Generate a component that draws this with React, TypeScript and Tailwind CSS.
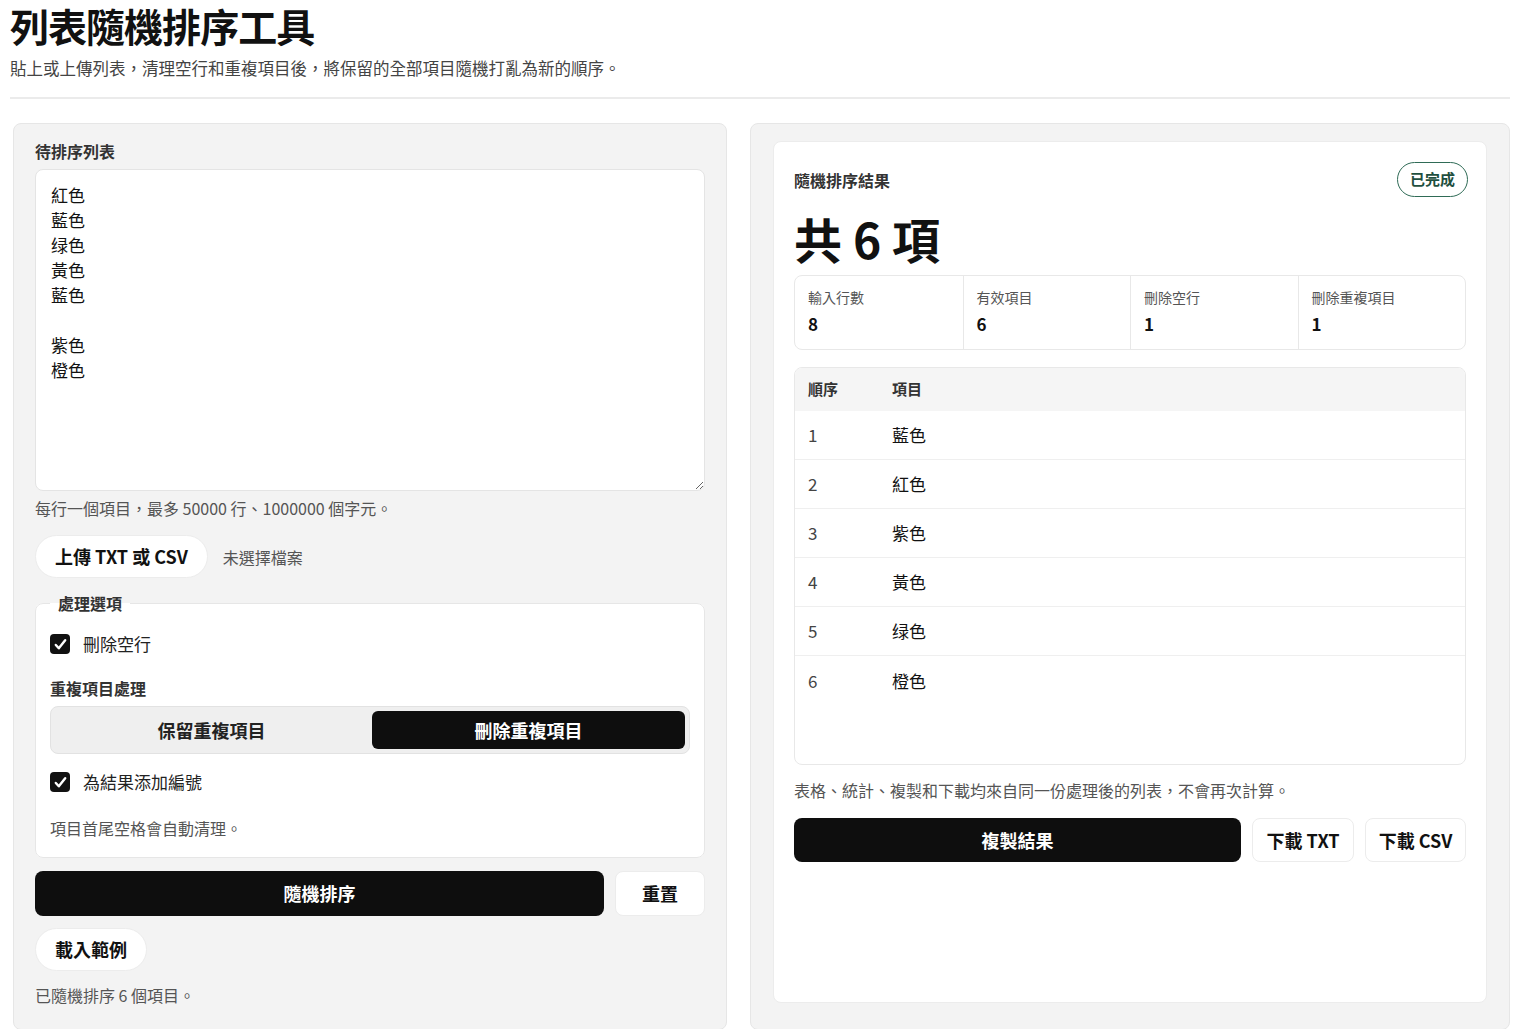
import { useState } from "react";

const INPUT = ["紅色", "藍色", "绿色", "黃色", "藍色", "", "紫色", "橙色"].join("\n");
const RESULT = ["藍色", "紅色", "紫色", "黃色", "绿色", "橙色"];

const STATS = [
  { label: "輸入行數", value: 8 },
  { label: "有效項目", value: 6 },
  { label: "刪除空行", value: 1 },
  { label: "刪除重複項目", value: 1 },
];

function Check({ checked, label, onToggle }: { checked: boolean; label: string; onToggle: () => void }) {
  return (
    <label className="flex h-6 cursor-pointer items-center gap-[13px]" onClick={onToggle}>
      <span
        className={
          checked
            ? "flex h-5 w-5 items-center justify-center rounded-[4px] bg-[#111]"
            : "flex h-5 w-5 items-center justify-center rounded-[4px] border-2 border-[#555] bg-white"
        }
      >
        {checked && (
          <svg viewBox="0 0 16 16" className="h-[15px] w-[15px]" fill="none" stroke="white" strokeWidth="2.6" strokeLinecap="round" strokeLinejoin="round">
            <path d="M3 8.5l3.2 3.5L13 3.5" />
          </svg>
        )}
      </span>
      <span className="text-[17px] text-[#222]">{label}</span>
    </label>
  );
}

export default function App() {
  const [dropBlank, setDropBlank] = useState(true);
  const [numbered, setNumbered] = useState(true);
  const [mode, setMode] = useState<"keep" | "remove">("remove");

  return (
    <div className="min-h-screen bg-white font-[Noto_Sans_CJK_TC,Noto_Sans,sans-serif] text-[#111]">
      <div className="w-[1510px] pl-[10px]">
        <h1 className="text-[39px] font-bold leading-[50px] tracking-tight">列表隨機排序工具</h1>
        <p className="mt-[6px] text-[16.5px] leading-6 text-[#444]">
          貼上或上傳列表，清理空行和重複項目後，將保留的全部項目隨機打亂為新的順序。
        </p>
        <div className="mt-[17px] h-[2px] bg-[#ebebeb]" />

        <div className="mt-[24px] grid grid-cols-[714px_760px] gap-[23px] pl-[3px]">
          {/* left: input */}
          <section className="rounded-lg border border-[#e6e6e6] bg-[#f3f3f3] px-[21px] pb-[22px] pt-[16px]">
            <div className="text-[16px] font-bold leading-[22px] text-[#333]">待排序列表</div>
            <textarea
              defaultValue={INPUT}
              className="mt-[7px] block h-[322px] w-full resize-y rounded-lg border border-[#e4e4e4] bg-white pl-[15px] pr-4 pt-3 text-[17px] leading-[25px] text-[#111] outline-none"
            />
            <p className="mt-[5px] text-[16px] leading-6 text-[#555]">每行一個項目，最多 50000 行、1000000 個字元。</p>

            <div className="mt-[15px] flex items-center gap-[15px]">
              <button className="h-[43px] rounded-full border border-[#ececec] bg-white px-[19px] text-[18px] font-bold">
                上傳 TXT 或 CSV
              </button>
              <span className="text-[16px] text-[#555]">未選擇檔案</span>
            </div>

            <fieldset className="mt-[13px] rounded-lg border border-[#e6e6e6] bg-white px-[14px] pb-[17px] pt-[17px]">
              <legend className="px-2 text-[16px] font-bold leading-6 text-[#333]">處理選項</legend>
              <Check checked={dropBlank} label="刪除空行" onToggle={() => setDropBlank((v) => !v)} />
              <div className="mt-5 text-[16px] font-bold leading-6 text-[#333]">重複項目處理</div>
              <div className="mt-[6px] grid h-12 grid-cols-2 gap-1 rounded-lg border border-[#e2e2e2] bg-[#efefef] p-1">
                <button
                  onClick={() => setMode("keep")}
                  className={
                    mode === "keep"
                      ? "rounded-md bg-[#0e0e0e] text-[18px] font-bold text-white"
                      : "rounded-md text-[18px] font-bold text-[#222]"
                  }
                >
                  保留重複項目
                </button>
                <button
                  onClick={() => setMode("remove")}
                  className={
                    mode === "remove"
                      ? "rounded-md bg-[#0e0e0e] text-[18px] font-bold text-white"
                      : "rounded-md text-[18px] font-bold text-[#222]"
                  }
                >
                  刪除重複項目
                </button>
              </div>
              <div className="mt-4">
                <Check checked={numbered} label="為結果添加編號" onToggle={() => setNumbered((v) => !v)} />
              </div>
              <p className="mt-[22px] text-[16px] leading-6 text-[#555]">項目首尾空格會自動清理。</p>
            </fieldset>

            <div className="mt-[13px] flex gap-[11px]">
              <button className="h-[45px] flex-1 rounded-lg bg-[#0e0e0e] text-[18px] font-bold text-white">隨機排序</button>
              <button className="h-[45px] w-[90px] rounded-lg border border-[#ececec] bg-white text-[18px] font-bold">重置</button>
            </div>
            <button className="mt-3 h-[43px] rounded-full border border-[#ececec] bg-white px-[19px] text-[18px] font-bold">
              載入範例
            </button>
            <p className="mt-3 text-[16px] leading-6 text-[#555]">已隨機排序 6 個項目。</p>
          </section>

          {/* right: result */}
          <section className="flex flex-col rounded-lg border border-[#e6e6e6] bg-[#f3f3f3] px-[22px] pb-[26px] pt-[17px]">
            <div className="flex flex-1 flex-col rounded-lg border border-[#ececec] bg-white px-5 pt-5">
              <div className="flex h-[35px] items-center justify-between">
                <span className="text-[16px] font-bold text-[#333]">隨機排序結果</span>
                <span className="mr-[-2px] flex h-[35px] items-center rounded-full border-[1.5px] border-[#2f6b56] px-3 text-[15px] font-bold text-[#1f4f3f]">
                  已完成
                </span>
              </div>
              <div className="mt-[16px] text-[48px] font-bold leading-[50px]">共 6 項</div>

              <div className="mt-3 grid grid-cols-4 rounded-lg border border-[#e8e8e8]">
                {STATS.map((s, i) => (
                  <div key={s.label} className={i === 0 ? "px-[13px] pb-[13px] pt-[11px]" : "border-l border-[#e8e8e8] px-[13px] pb-[13px] pt-[11px]"}>
                    <div className="text-[14px] leading-5 text-[#555]">{s.label}</div>
                    <div className="mt-[5px] text-[17px] font-bold leading-6">{s.value}</div>
                  </div>
                ))}
              </div>

              <div className="mt-[17px] h-[398px] overflow-hidden rounded-lg border border-[#e8e8e8]">
                <div className="flex h-[43px] items-center bg-[#f5f5f5] text-[15px] font-bold text-[#333]">
                  <span className="w-[84px] pl-[13px]">順序</span>
                  <span className="pl-[13px]">項目</span>
                </div>
                {RESULT.map((item, i) => (
                  <div
                    key={i}
                    className={
                      i < RESULT.length - 1
                        ? "flex h-[49px] items-center border-b border-[#efefef] text-[17px]"
                        : "flex h-[49px] items-center text-[17px]"
                    }
                  >
                    <span className="w-[84px] pl-[13px] text-[#444]">{i + 1}</span>
                    <span className="pl-[13px] text-[#111]">{item}</span>
                  </div>
                ))}
              </div>

              <p className="mt-[13px] text-[16px] leading-6 text-[#555]">
                表格、統計、複製和下載均來自同一份處理後的列表，不會再次計算。
              </p>
              <div className="mt-4 flex gap-[11px]">
                <button className="h-[44px] flex-1 rounded-lg bg-[#0e0e0e] text-[18px] font-bold text-white">複製結果</button>
                <button className="h-[44px] w-[102px] rounded-lg border border-[#ececec] bg-white text-[18px] font-bold">下載 TXT</button>
                <button className="h-[44px] w-[101px] rounded-lg border border-[#ececec] bg-white text-[18px] font-bold">下載 CSV</button>
              </div>
            </div>
          </section>
        </div>
      </div>
    </div>
  );
}
